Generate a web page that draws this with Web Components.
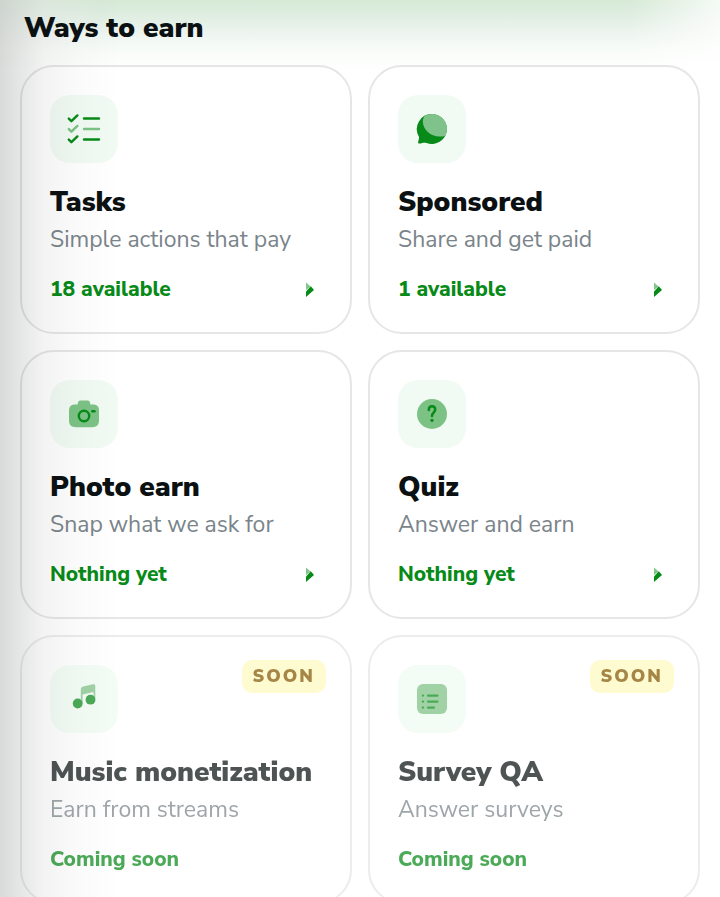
<!DOCTYPE html>
<html lang="en">
<head>
<meta charset="utf-8">
<meta name="viewport" content="width=device-width, initial-scale=1">
<title>Ways to earn</title>
<style>
    body {
        margin: 0;
        background: #fff;
        color: #0b1112;
        font-family: "Nunito Sans", Nunito, Lato, "Open Sans", sans-serif;
    }
</style>
</head>
<body>

<earn-page>
    <span slot="title">Ways to earn</span>
    <earn-card icon="tasks" name="Tasks" status="18 available">Simple actions that pay</earn-card>
    <earn-card icon="chat" name="Sponsored" status="1 available">Share and get paid</earn-card>
    <earn-card icon="camera" name="Photo earn" status="Nothing yet">Snap what we ask for</earn-card>
    <earn-card icon="quiz" name="Quiz" status="Nothing yet">Answer and earn</earn-card>
    <earn-card icon="music" name="Music monetization" status="Coming soon" soon>Earn from streams</earn-card>
    <earn-card icon="survey" name="Survey QA" status="Coming soon" soon>Answer surveys</earn-card>
</earn-page>

<script>
// two-tone icons, 34x34: "lite" is the faded layer
const ICONS = {
    tasks: `
        <g fill="none" stroke="currentColor" stroke-width="2.4" stroke-linecap="round" stroke-linejoin="round">
            <path d="M1.8 6.6l2.6 2.6 6-5.8M17 6.5h15"/>
            <path class="lite" d="M1.8 17.1l2.6 2.6 6-5.8M17 17h15"/>
            <path d="M1.8 27.6l2.6 2.6 6-5.8M17 27.5h15"/>
        </g>`,
    chat: `
        <path fill="currentColor" d="M17 2A15 15 0 1 1 11.5 31c-2.2-.7-4.6.4-7 .6-1.3.1-1.6-.7-1.3-1.9.5-1.8 1.2-3.5.6-5.3A15 15 0 0 1 17 2z"/>
        <path fill="#80c38a" d="M9.5 4A15 15 0 0 1 30.4 23.7C18 27.5 6.5 18 8 8Q8.400 5.500 9.500 4z"/>`,
    camera: `
        <path class="lite" fill="currentColor" d="M13.5 3.5h7c1.5 0 2.2.8 2.5 2l.4 2h2.6c4 0 6 2.2 6 6v9.6c0 5-2.2 7.200-7.200 7.200H9.200C4.200 30.300 2 28.100 2 23.100v-9.600c0-3.800 2-6 6-6h2.600l.4-2c.3-1.200 1-2 2.500-2z"/>
        <circle cx="17" cy="19" r="5.2" fill="none" stroke="currentColor" stroke-width="2.4"/>
        <path d="M25.3 14.2h2.2" stroke="currentColor" stroke-width="2.4" stroke-linecap="round"/>`,
    quiz: `
        <circle class="lite" cx="17" cy="17" r="15" fill="currentColor"/>
        <path d="M13.8 13c0-2.2 1.4-3.7 3.2-3.7s3.2 1.4 3.2 3.3c0 3-3.2 3.1-3.2 6.3" fill="none" stroke="currentColor" stroke-width="2.5" stroke-linecap="round"/>
        <circle cx="17" cy="23.3" r="1.6" fill="currentColor"/>`,
    music: `
        <path class="lite" fill="currentColor" d="M13.800 21V7.6c0-1.6.8-2.6 2.4-3l9.800-2.300c1.500-.3 2.300.3 2.300 1.800V17h-1.800V10l-10.900 2.500V21z"/>
        <circle cx="10.7" cy="21.5" r="4.9" fill="currentColor"/>
        <circle cx="23.5" cy="17.7" r="4.9" fill="currentColor"/>`,
    survey: `
        <rect class="lite" x="2" y="2" width="30" height="30" rx="6" fill="currentColor"/>
        <path d="M13 13.6h9.5M13 19.6h9.5M13 25.6h6M7.8 13.6h.3M7.8 19.6h.3M7.8 25.6h.3" stroke="currentColor" stroke-width="2.2" stroke-linecap="round"/>`
};

class EarnPage extends HTMLElement {
    constructor() {
        super();
        this._root = this.attachShadow({ mode: 'open' });
    }

    connectedCallback() {
        this._root.innerHTML = `
        <style>
            :host {
                display: block;
                position: relative;
                isolation: isolate;
                padding: 10px 20px 24px;
                --fade: linear-gradient(to right, rgba(0, 0, 0, .35), #000 100px, #000 calc(100% - 90px), rgba(0, 0, 0, .25));
            }
            /* green glow behind the heading */
            :host::before {
                content: "";
                position: absolute;
                z-index: -1;
                inset: 0 0 auto;
                height: 72px;
                background: linear-gradient(#d6ead6, #dcecde 15%, #edf4ee 45%, #f8fcf8 70%, #fff);
                -webkit-mask-image: var(--fade);
                mask-image: var(--fade);
            }
            /* soft shade down the left edge, over the cards */
            :host::after {
                content: "";
                position: absolute;
                inset: 0 auto 0 0;
                width: 120px;
                pointer-events: none;
                background: linear-gradient(to right, rgba(16, 24, 20, .16), rgba(16, 24, 20, .11) 16%, rgba(16, 24, 20, .05) 36%, rgba(16, 24, 20, .02) 65%, transparent);
            }
            h1 {
                margin: 0 4px 19px;
                font-size: 28px;
                line-height: 36px;
                font-weight: 900;
            }
            .grid {
                display: grid;
                grid-template-columns: repeat(2, minmax(0, 1fr));
                gap: 16px;
            }
        </style>
        <h1><slot name="title"></slot></h1>
        <div class="grid"><slot></slot></div>
    `;
    }
}

class EarnCard extends HTMLElement {
    constructor() {
        super();
        this._root = this.attachShadow({ mode: 'open' });
    }

    connectedCallback() {
        const soon = this.hasAttribute('soon');
        this._root.innerHTML = `
        <style>
            :host {
                display: block;
            }
            :host([soon]) {
                opacity: .72;
            }
            .card {
                position: relative;
                display: flex;
                flex-direction: column;
                box-sizing: border-box;
                height: 100%;
                padding: 28px;
                border: 2px solid #e6e6e7;
                border-radius: 34px;
                background: #fff;
                color: inherit;
                text-decoration: none;
            }
            .tile {
                display: grid;
                place-items: center;
                width: 68px;
                height: 68px;
                margin-bottom: 22px;
                border-radius: 20px;
                background: #f1fbf3;
                color: #078a17;
            }
            .lite {
                opacity: .5;
            }
            h2 {
                margin: 0 0 5px;
                font-size: 28px;
                line-height: 34px;
                font-weight: 900;
            }
            p {
                margin: 0 0 18px;
                font-size: 23px;
                line-height: 32px;
                color: #7a848a;
            }
            .foot {
                display: flex;
                align-items: center;
                justify-content: space-between;
                padding-right: 8px;
                font-size: 21px;
                line-height: 30px;
                font-weight: 800;
                color: #078a17;
            }
            .badge {
                position: absolute;
                top: 23px;
                right: 24px;
                padding: 0 11px;
                border-radius: 10px;
                background: #fffac0;
                color: #835800;
                font-size: 18px;
                line-height: 33px;
                font-weight: 900;
                letter-spacing: 2px;
            }
        </style>
        <a class="card" href="#${this.getAttribute('icon')}">
            <span class="tile"><svg width="34" height="34" viewBox="0 0 34 34" aria-hidden="true">${ICONS[this.getAttribute('icon')]}</svg></span>
            <h2></h2>
            <p><slot></slot></p>
            <span class="foot">
                <span class="status"></span>
                ${soon ? '' : `<svg width="8" height="16" viewBox="0 0 8 16" aria-hidden="true">
                    <path class="lite" fill="currentColor" d="M0 1.5l4.5 4L0 9z"/>
                    <path fill="currentColor" d="M0 10.5L4.8 5.2 8 9 0 16z"/>
                </svg>`}
            </span>
            ${soon ? '<span class="badge">SOON</span>' : ''}
        </a>
    `;
        this._root.querySelector('h2').textContent = this.getAttribute('name');
        this._root.querySelector('.status').textContent = this.getAttribute('status');
    }
}

window.customElements.define('earn-page', EarnPage);
window.customElements.define('earn-card', EarnCard);
</script>
</body>
</html>
